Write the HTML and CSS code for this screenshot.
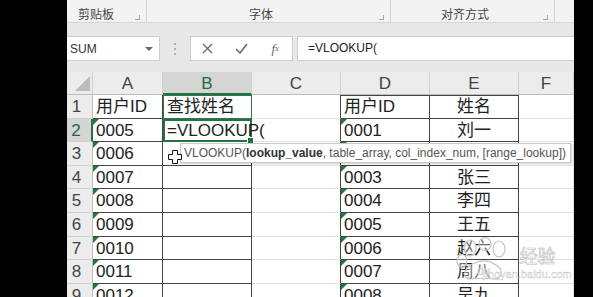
FILE: index.html
```html
<!DOCTYPE html>
<html>
<head>
  <meta charset="UTF-8">
  <link rel="stylesheet" href="styles.css">
  <title>VLOOKUP</title>
</head>
<body>
<div class="screen">
<div class="app">

  <div class="ribbon">
    <div class="group g-clip"><span class="glabel left">剪贴板</span><span class="launch"></span></div>
    <div class="group g-font"><span class="glabel">字体</span><span class="launch"></span></div>
    <div class="group g-align"><span class="glabel">对齐方式</span><span class="launch"></span></div>
    <div class="group g-rest"></div>
  </div>

  <div class="fband">
    <div class="namebox"><span>SUM</span><span class="caret"></span></div>
    <div class="grip"><i></i><i></i><i></i></div>
    <div class="fbtns">
      <span class="fb">
        <svg width="11" height="11" viewBox="0 0 11 11"><path d="M1 1 L10 10 M10 1 L1 10" stroke="#6a6a6a" stroke-width="1.4" fill="none"/></svg>
      </span>
      <span class="fb">
        <svg width="13" height="11" viewBox="0 0 13 11"><path d="M1 6 L5 10 L12 1" stroke="#6a6a6a" stroke-width="1.6" fill="none"/></svg>
      </span>
      <span class="fb fx">f<sub>x</sub></span>
    </div>
    <div class="finput">=VLOOKUP(</div>
  </div>

  <div class="sheet">
    <div class="hd corner"></div><div class="hd">A</div><div class="hd sel">B</div><div class="hd">C</div><div class="hd">D</div><div class="hd">E</div><div class="hd">F</div>

    <div class="rh">1</div><div class="c tb">用户ID</div><div class="c tb b1">查找姓名</div><div class="c edge"></div><div class="c tb top">用户ID</div><div class="c tb top mid">姓名</div><div class="c"></div>
    <div class="rh sel">2</div><div class="c tb t">0005</div><div class="c tb active">=VLOOKUP(</div><div class="c edge"></div><div class="c tb t">0001</div><div class="c tb mid">刘一</div><div class="c"></div>
    <div class="rh">3</div><div class="c tb t">0006</div><div class="c tb"></div><div class="c edge"></div><div class="c tb t"></div><div class="c tb mid"></div><div class="c"></div>
    <div class="rh">4</div><div class="c tb t">0007</div><div class="c tb"></div><div class="c edge"></div><div class="c tb t">0003</div><div class="c tb mid">张三</div><div class="c"></div>
    <div class="rh">5</div><div class="c tb t">0008</div><div class="c tb"></div><div class="c edge"></div><div class="c tb t">0004</div><div class="c tb mid">李四</div><div class="c"></div>
    <div class="rh">6</div><div class="c tb t">0009</div><div class="c tb"></div><div class="c edge"></div><div class="c tb t">0005</div><div class="c tb mid">王五</div><div class="c"></div>
    <div class="rh">7</div><div class="c tb t">0010</div><div class="c tb"></div><div class="c edge"></div><div class="c tb t">0006</div><div class="c tb mid">赵六</div><div class="c"></div>
    <div class="rh">8</div><div class="c tb t">0011</div><div class="c tb"></div><div class="c edge"></div><div class="c tb t">0007</div><div class="c tb mid">周八</div><div class="c"></div>
    <div class="rh">9</div><div class="c tb t">0012</div><div class="c tb"></div><div class="c edge"></div><div class="c tb t">0008</div><div class="c tb mid">吴九</div><div class="c"></div>
  </div>

  <!-- function hint over row 3 -->
  <div class="tip">VLOOKUP(<b>lookup_value</b>, table_array, col_index_num, [range_lookup])</div>

  <svg class="cursor" width="14" height="14" viewBox="0 0 14 14">
    <path d="M4.5 0.5 H9.5 V4.5 H13.5 V9.5 H9.5 V13.5 H4.5 V9.5 H0.5 V4.5 H4.5 Z" fill="#fff" stroke="#111" stroke-width="1"/>
  </svg>

  <div class="mark">
    <svg class="paw" width="62" height="46" viewBox="0 0 62 46">
      <g fill="rgba(255,255,255,0.35)" stroke="#c4c4c4" stroke-width="1.2">
        <ellipse cx="17" cy="11" rx="6" ry="8"/>
        <ellipse cx="32" cy="7" rx="6" ry="6.5"/>
        <ellipse cx="46" cy="12" rx="6" ry="8"/>
        <ellipse cx="9" cy="24" rx="5" ry="6.5"/>
        <path d="M17 42 C8 42 11 29 22 26 C27 23 36 23 41 27 C51 31 51 43 40 42 C33 41 25 41 17 42 Z"/>
      </g>
      <text x="24" y="38" class="du">du</text>
    </svg>
    <span class="jy">经验</span>
    <div class="url">jingyan.baidu.com</div>
  </div>

</div>
</div>
</body>
</html>
```

FILE: styles.css
```css
html, body {
  margin: 0;
  background: #000;
  height: 297px;
  overflow: hidden;
}

.screen {
  display: flex;
  padding-left: 67px;
}

.app {
  position: relative;
  width: 507px;
  height: 297px;
  overflow: hidden;
  background: #fff;
  font-family: "Liberation Sans", "Noto Sans CJK SC", sans-serif;
}

/* ribbon group labels */
.ribbon {
  display: flex;
  height: 22px;
  background: #f3f3f3;
  border-bottom: 1px solid #d6d6d6;
}
.group {
  display: flex;
  align-items: center;
  padding-top: 8px;
  box-sizing: border-box;
  border-right: 1px solid #d2d2d2;
  font-size: 12px;
  color: #444;
}
.g-clip  { width: 80px; }
.g-font  { width: 244px; }
.g-align { width: 164px; }
.g-rest  { flex: 1; border-right: none; }
.glabel {
  flex: 1;
  text-align: center;
  line-height: 14px;
}
.glabel.left {
  text-align: left;
  padding-left: 11px;
}
.launch {
  width: 4px;
  height: 4px;
  margin: 4px 6px 0 4px;
  border-right: 1px solid #a8a8a8;
  border-bottom: 1px solid #a8a8a8;
}

/* formula bar */
.fband {
  display: flex;
  height: 25px;
  padding: 13px 0 11px;
  background: #e8e8e8;
}
.namebox {
  display: flex;
  align-items: center;
  width: 93px;
  box-sizing: border-box;
  background: #fff;
  border: 1px solid #cdcdcd;
  border-left: none;
  font-size: 12px;
  color: #333;
  padding-left: 3px;
}
.namebox span:first-child { flex: 1; }
.caret {
  width: 0;
  height: 0;
  margin-right: 6px;
  border-left: 4px solid transparent;
  border-right: 4px solid transparent;
  border-top: 4px solid #666;
}
.grip {
  width: 30px;
  display: flex;
  flex-direction: column;
  align-items: center;
  justify-content: center;
  gap: 3px;
}
.grip i {
  width: 2px;
  height: 2px;
  background: #b0b0b0;
}
.fbtns {
  display: flex;
  width: 103px;
  box-sizing: border-box;
  background: #fff;
  border: 1px solid #cdcdcd;
}
.fb {
  flex: 1;
  display: flex;
  align-items: center;
  justify-content: center;
}
.fx {
  font-family: "Liberation Serif", serif;
  font-style: italic;
  font-size: 13px;
  color: #666;
}
.fx sub {
  font-size: 8px;
  vertical-align: -1px;
}
.finput {
  flex: 1;
  margin-left: 4px;
  background: #fff;
  border: 1px solid #cdcdcd;
  border-right: none;
  padding-left: 10px;
  font-size: 12px;
  line-height: 23px;
  color: #222;
}

/* grid */
.sheet {
  display: grid;
  grid-template-columns: 26px 70px 89px 89px 89px 89px 55px;
  grid-template-rows: 23px repeat(9, 23.6px);
  font-size: 17px;
}
.sheet > div {
  position: relative;
  box-sizing: border-box;
  white-space: nowrap;
  overflow: visible;
}
.hd {
  background: #ececec;
  border-right: 1px solid #d0d0d0;
  border-bottom: 1px solid #bdbdbd;
  text-align: center;
  line-height: 23px;
  color: #444;
}
.hd.sel {
  background: #d5d5d5;
  color: #1f6b41;
  border-bottom: 2px solid #217346;
}
.corner::after {
  content: "";
  position: absolute;
  right: 2px;
  bottom: 3px;
  border-left: 15px solid transparent;
  border-bottom: 15px solid #bcbcbc;
}
.rh {
  background: #ececec;
  border-right: 1px solid #bdbdbd;
  border-bottom: 1px solid #d0d0d0;
  padding-right: 6px;
  text-align: center;
  line-height: 23px;
  color: #444;
}
.rh.sel {
  background: #d5d5d5;
  color: #1f6b41;
  border-right: 2px solid #217346;
}
.c {
  border-right: 1px solid #e2e2e2;
  border-bottom: 1px solid #e2e2e2;
  padding: 0 3px;
  line-height: 23px;
  color: #222;
}
.c.tb {
  border-right-color: #444;
  border-bottom-color: #444;
}
.c.edge { border-right-color: #444; }
.c.top  { border-top: 1px solid #444; line-height: 22px; }
.c.mid  { text-align: center; }
.c.b1 {
  border: 1px solid #2f7550;
  line-height: 21px;
}
.c.active {
  border: 2px solid #217346;
  line-height: 20px;
  padding-left: 2px;
}
.c.active::after {
  content: "";
  position: absolute;
  right: -4px;
  bottom: -4px;
  width: 5px;
  height: 5px;
  background: #217346;
  border: 1px solid #fff;
  z-index: 2;
}
.c.t::before {
  content: "";
  position: absolute;
  left: 0;
  top: 0;
  border-top: 6px solid #1c7a3c;
  border-right: 6px solid transparent;
}

/* overlays */
.tip {
  position: absolute;
  left: 113px;
  top: 143px;
  width: 391px;
  height: 20px;
  box-sizing: border-box;
  padding-left: 3px;
  background: #fff;
  border: 1px solid #c8c8c8;
  box-shadow: 1px 1px 2px rgba(0,0,0,0.2);
  font-size: 12px;
  line-height: 18px;
  color: #555;
  white-space: nowrap;
  overflow: hidden;
  z-index: 3;
}
.tip b { color: #333; }

.cursor {
  position: absolute;
  left: 101px;
  top: 150px;
  z-index: 4;
}

.mark {
  position: absolute;
  left: 386px;
  top: 237px;
  width: 120px;
  z-index: 4;
}
.paw { vertical-align: top; }
.du {
  font-size: 12px;
  fill: #cfcfcf;
  font-family: "Liberation Sans", sans-serif;
}
.jy {
  display: inline-block;
  margin-top: 9px;
  font-family: "Noto Sans CJK SC", sans-serif;
  font-size: 18px;
  line-height: 18px;
  color: rgba(255,255,255,0.8);
  -webkit-text-stroke: 0.6px #bdbdbd;
}
.url {
  position: absolute;
  left: 30px;
  top: 31px;
  font-size: 11px;
  color: rgba(255,255,255,0.6);
  -webkit-text-stroke: 0.4px #c4c4c4;
}
```
